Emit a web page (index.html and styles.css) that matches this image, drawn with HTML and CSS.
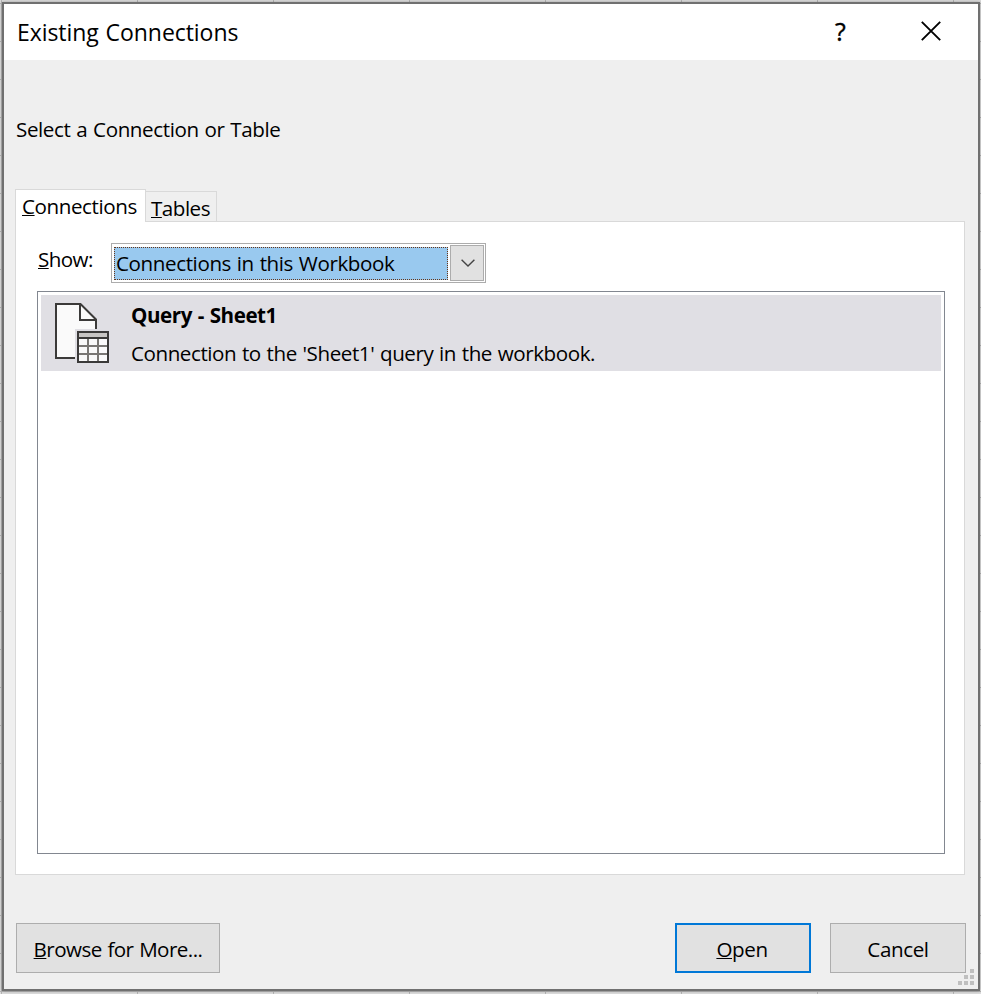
FILE: index.html
```html
<!DOCTYPE html>
<html lang="en">
<head>
<meta charset="utf-8">
<title>Existing Connections</title>
<link rel="stylesheet" href="styles.css">
</head>
<body>
<div class="dialog">
  <header class="titlebar">
    <h1 class="title">Existing Connections</h1>
    <span class="help">?</span>
    <svg class="close" width="20" height="20" viewBox="0 0 20 20"><path d="M.8 .8 19.2 19.2M19.2 .8 .8 19.2" fill="none" stroke="#000" stroke-width="1.9"/></svg>
  </header>
  <main class="content">
    <p class="prompt">Select a Connection or Table</p>
    <nav class="tabs">
      <div class="tab active"><span><u>C</u>onnections</span></div>
      <div class="tab"><span><u>T</u>ables</span></div>
    </nav>
    <section class="panel">
      <div class="filter">
        <label class="show"><u>S</u>how:</label>
        <div class="combo">
          <div class="selected"><span>Connections in this Workbook</span></div>
          <div class="drop"><svg width="14" height="8" viewBox="0 0 14 8"><path d="M.6 .8 7 7 13.4 .8" fill="none" stroke="#444" stroke-width="1.4"/></svg></div>
        </div>
      </div>
      <div class="list">
        <div class="item">
          <svg class="icon" width="54" height="60" viewBox="0 0 54 60">
            <path d="M1 1H25.5L41 16.5V40H25V55H1Z" fill="#fafafa"/>
            <path d="M20 55H1V1H25.5L41 16.5V26M25 1V17H41" fill="none" stroke="#3b3a39" stroke-width="2"/>
            <path d="M20 26H54V60H20Z" fill="#e0dfe4"/>
            <path d="M23 29H53V59H23Z" fill="#fafafa"/>
            <path d="M23 29H53V35H23Z" fill="#c8c6c4"/>
            <path d="M33 36V59M43 36V59M23 43H53M23 51H53" stroke="#797774" stroke-width="2"/>
            <path d="M23 29H53V59H23ZM23 35H53" fill="none" stroke="#3b3a39" stroke-width="2"/>
          </svg>
          <div class="lines">
            <strong>Query - Sheet1</strong>
            <span class="desc">Connection to the 'Sheet1' query in the workbook.</span>
          </div>
        </div>
      </div>
    </section>
    <footer class="actions">
      <button class="btn browse"><u>B</u>rowse for More...</button>
      <button class="btn primary"><u>O</u>pen</button>
      <button class="btn">Cancel</button>
    </footer>
  </main>
  <svg class="grip" width="16" height="16" viewBox="0 0 16 16"><path d="M12 0h4v4h-4zM6 6h4v4H6zM12 6h4v4h-4zM0 12h4v4H0zM6 12h4v4H6zM12 12h4v4h-4z" fill="#bfbfbf"/></svg>
</div>
</body>
</html>
```
FILE: styles.css
```css
* { box-sizing: border-box; }
body {
  margin: 0;
  height: 994px;
  padding: 2px 1px 3px 2px;
  overflow: hidden;
  font: 20.6px/30px "Open Sans", "Noto Sans", sans-serif;
  letter-spacing: -.4px;
  word-spacing: .85px;
  color: #000;
  background-color: #dcdcdc;
  background-image:
    linear-gradient(90deg, #b4b4b4 1px, transparent 1px),
    linear-gradient(#b4b4b4 1px, transparent 1px);
  background-size: 136px 100%, 100% 38px;
  background-position: 1px 0, 0 3px;
}
span, strong { white-space: nowrap; }
u { text-decoration-thickness: 1px; text-underline-offset: 1px; text-decoration-skip-ink: none; }
.dialog {
  position: relative;
  width: 978px;
  height: 989px;
  border: 2px solid #707070;
  background: #efefef;
  box-shadow: 0 0 3px rgba(0, 0, 0, .3);
}
.titlebar {
  display: flex;
  align-items: center;
  height: 56px;
  padding: 0 37px 2px 13px;
  background: #fff;
}
.title {
  margin: 0;
  padding-top: 2px;
  flex: 1;
  font-size: 23px;
  font-weight: 400;
  letter-spacing: -.06px;
  word-spacing: 1px;
  white-space: nowrap;
}
.help { width: 12px; margin-right: 74px; padding-bottom: 1px; font-size: 25px; -webkit-text-stroke: .4px #000; }
.content { padding: 0 11px; }
.prompt { margin: 0; padding: 54px 0 0 1px; height: 129px; }
.tabs { display: flex; align-items: flex-end; height: 33px; margin-bottom: -1px; }
.tab {
  width: 71px;
  height: 31px;
  padding: 1px 0 0 5px;
  border: 1px solid #d9d9d9;
  border-left: 0;
  letter-spacing: -.5px;
}
.tab.active {
  position: relative;
  width: 131px;
  height: 33px;
  padding: 1px 0 0 6px;
  border-left: 1px solid #d9d9d9;
  border-bottom: 0;
  background: #fff;
  letter-spacing: -.42px;
}
.panel {
  width: 950px;
  height: 654px;
  padding: 21px 19px 20px 21px;
  border: 1px solid #d9d9d9;
  background: #fff;
}
.filter { display: flex; }
.show { width: 74px; padding: 1px 0 0 1px; letter-spacing: -.6px; }
.combo {
  display: flex;
  width: 375px;
  height: 40px;
  padding: 1px;
  border: 1px solid #acacac;
}
.selected {
  width: 335px;
  height: 33px;
  margin: 2px 2px 0 1px;
  padding-left: 1px;
  line-height: 31px;
  border: 1px dotted #66361a;
  background: #99c9ef;
}
.drop {
  display: flex;
  align-items: center;
  justify-content: center;
  width: 34px;
  height: 36px;
  padding-left: 1px;
  border: 1px solid #acacac;
  background: #e1e1e1;
}
.list { width: 908px; height: 563px; margin-top: 8px; padding: 3px; border: 1px solid #828790; }
.item { display: flex; width: 900px; height: 76px; background: #e0dfe4; }
.icon { margin: 8px 22px 0 14px; }
.lines { display: flex; flex-direction: column; gap: 8px; padding-top: 5px; letter-spacing: -.44px; }
.actions { display: flex; align-items: center; margin-top: 48px; padding-left: 1px; }
.btn {
  width: 136px;
  height: 50px;
  margin-right: 19px;
  padding: 1px 0 0;
  border: 1px solid #adadad;
  background: #e1e1e1;
  font: inherit;
  letter-spacing: inherit;
  word-spacing: inherit;
  color: inherit;
}
.btn:last-child { margin-right: 0; }
.browse { width: 204px; margin-right: 455px; letter-spacing: -.55px; }
.primary { padding-right: 2px; border: 2px solid #0078d7; }
.grip { position: absolute; right: 4px; bottom: 4px; }
```
